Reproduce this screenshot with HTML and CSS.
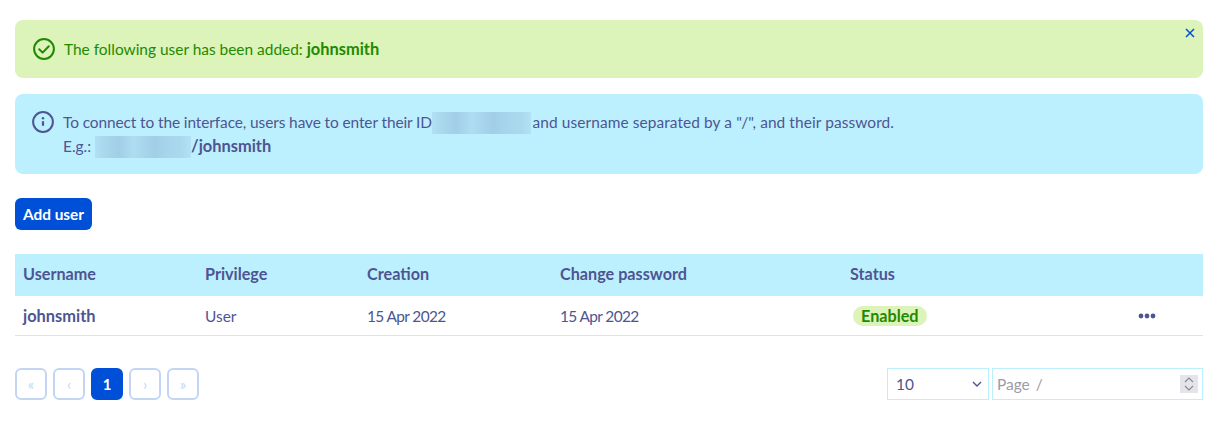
FILE: index.html
```html
<!DOCTYPE html>
<html lang="en">
<head>
<meta charset="utf-8">
<title>Users</title>
<link rel="stylesheet" href="styles.css">
</head>
<body>
<main class="page">
  <section class="alert alert-success">
    <svg class="alert-icon" viewBox="0 0 22 22" width="22" height="22" fill="none" stroke="currentColor" stroke-width="2"><circle cx="11" cy="11" r="9.9"/><path d="M6.2 11.2l3.4 3.4 6.2-6.4" stroke-linecap="round" stroke-linejoin="round"/></svg>
    <p class="alert-text">The following user has been added: <strong>johnsmith</strong></p>
    <button class="alert-close" aria-label="Close"><svg viewBox="0 0 10 10" width="10" height="10" fill="none" stroke="currentColor" stroke-width="1.5"><path d="M1 1l8 8M9 1l-8 8"/></svg></button>
  </section>
  <section class="alert alert-info">
    <svg class="alert-icon" viewBox="0 0 22 22" width="22" height="22" fill="none" stroke="currentColor" stroke-width="2"><circle cx="11" cy="11" r="9.9"/><path d="M11 10.2v4.6" stroke-width="2.2"/><circle cx="11" cy="7.2" r="1.2" fill="currentColor" stroke="none"/></svg>
    <p class="alert-text"><span class="tight">To connect to the interface, users have to enter their ID</span><span class="blur blur-a"></span><span class="loose"> and username separated by a "/", and their password.</span><br>E.g.: <span class="blur blur-b"></span><strong>/johnsmith</strong></p>
  </section>
  <button class="btn-primary">Add user</button>
  <table class="users">
    <thead>
      <tr><th class="c1">Username</th><th class="c2">Privilege</th><th class="c3">Creation</th><th class="c4">Change password</th><th class="c5">Status</th><th></th></tr>
    </thead>
    <tbody>
      <tr>
        <td><strong>johnsmith</strong></td><td>User</td><td class="date">15 Apr 2022</td><td class="date">15 Apr 2022</td>
        <td><span class="badge">Enabled</span></td>
        <td class="actions"><svg viewBox="0 0 18 6" width="18" height="6" fill="currentColor"><circle cx="3" cy="3" r="2.4"/><circle cx="9" cy="3" r="2.4"/><circle cx="15" cy="3" r="2.4"/></svg></td>
      </tr>
    </tbody>
  </table>
  <div class="footer">
    <nav class="pager">
      <span class="page-btn">«</span><span class="page-btn">‹</span><span class="page-btn current">1</span><span class="page-btn">›</span><span class="page-btn">»</span>
    </nav>
    <div class="controls">
      <div class="select"><span>10</span><svg viewBox="0 0 10 6" width="10" height="6" fill="none" stroke="currentColor" stroke-width="1.4"><path d="M1 1l4 4 4-4"/></svg></div>
      <div class="page-input"><span>Page&nbsp; /</span><span class="spinner"><svg viewBox="0 0 18 18" width="18" height="18" fill="none" stroke="#8a8a94" stroke-width="1.2"><path d="M5 7l4-4 4 4M5 11l4 4 4-4"/></svg></span></div>
    </div>
  </div>
</main>
</body>
</html>
```
FILE: styles.css
```css
* { box-sizing: border-box; }
html, body { margin: 0; background: #fff; }
body { font-family: "Lato", "Noto Sans", sans-serif; font-size: 15.45px; line-height: 24px; color: #4d5592; }
.page { padding: 20px 15px; }
p { margin: 0; }
strong { font-size: 16.4px; font-weight: 700; }
.tight { letter-spacing: -0.1px; }
.loose { letter-spacing: 0.09px; }

.alert { display: flex; position: relative; border-radius: 8px; margin-bottom: 16px; }
.alert-icon { flex: none; }
.alert-success { height: 58px; align-items: center; padding: 0 18px; background: #dcf3b9; color: #1f8a00; gap: 9px; }
.alert-info { height: 80px; padding: 16px 17px; background: #bdf0ff; gap: 9px; }
.alert-info .alert-icon { margin-top: 1px; }
.alert-close { position: absolute; top: 8px; right: 8px; border: 0; padding: 0; background: none; color: #0050d7; display: flex; }

.blur { display: inline-block; height: 22px; vertical-align: -6px; background: linear-gradient(90deg, #b0e0f3 0%, #a8d6ec 12%, #a2cfe7 25%, #aedcf1 40%, #a2cfe7 62%, #a8d6ec 78%, #aad9ee 90%, #b2e2f5 100%); }
.blur-a { width: 99px; margin-right: -2.5px; }
.blur-b { width: 96px; }

.btn-primary { display: block; width: 77px; height: 32px; margin: 24px 0; padding: 0; border: 0; border-radius: 6px; background: #0050d7; color: #fff; font: 700 15.4px/32px "Lato", sans-serif; }

.users { width: 100%; border-collapse: separate; border-spacing: 0; table-layout: fixed; }
.users th { height: 42px; padding: 0 8px 2px; background: #bdf0ff; text-align: left; font-size: 16.2px; font-weight: 700; }
.users td { height: 40px; padding: 0 8px; border-bottom: 1px solid #bdf0ff; }
.c1 { width: 182px; }
.c2 { width: 162px; }
.c3 { width: 193px; }
.c4 { width: 290px; }
.c5 { width: 288px; }
.date { letter-spacing: -0.62px; }
.badge { display: inline-block; height: 20px; margin-left: 3px; padding: 0 8px; border-radius: 10px; background: #dcf3b9; color: #1f8a00; font-size: 16.2px; font-weight: 700; line-height: 20px; }
.actions { color: #4d5592; }
.actions svg { display: block; }

.footer { display: flex; justify-content: space-between; margin-top: 32px; }
.pager { display: flex; gap: 6px; }
.page-btn { width: 32px; height: 32px; border: 2px solid #c2d5f4; border-radius: 6px; color: #c2d5f4; text-align: center; line-height: 29px; font-size: 15px; }
.page-btn.current { background: #0050d7; border-color: #0050d7; color: #fff; font-weight: 700; }
.controls { display: flex; gap: 3px; }
.select { display: flex; align-items: center; justify-content: space-between; width: 102px; height: 32px; padding: 0 6px 0 8px; border: 1px solid #bdf0ff; }
.page-input { display: flex; align-items: center; justify-content: space-between; width: 211px; height: 32px; padding: 0 4px 0 4px; border: 1px solid #bdf0ff; color: #9a9ca8; word-spacing: -1px; }
.spinner { display: block; width: 18px; height: 18px; background: #e4e4ea; }
.spinner svg { display: block; }
```
